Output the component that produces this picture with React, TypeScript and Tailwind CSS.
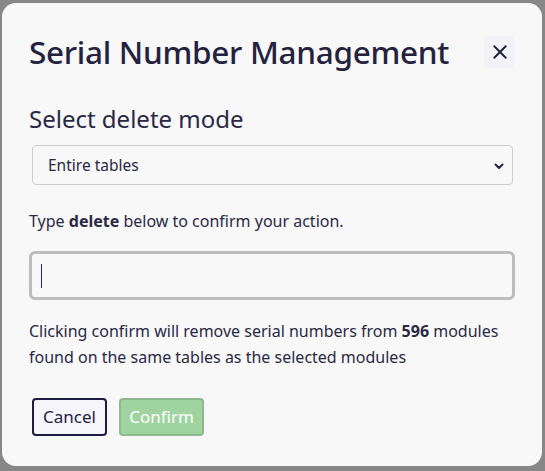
import React from 'react'

const font = { fontFamily: '"Noto Sans", "Open Sans", sans-serif' }

function CloseIcon() {
  return (
    <svg width="14" height="14" viewBox="0 0 14 14" fill="none" aria-hidden="true">
      <path d="M1.5 1.5 12.5 12.5M12.5 1.5 1.5 12.5" stroke="#24223f" strokeWidth="2" strokeLinecap="square" />
    </svg>
  )
}

function Chevron() {
  return (
    <svg width="10" height="7" viewBox="0 0 10 7" fill="none" aria-hidden="true">
      <path d="M1.5 1.5 5 5 8.5 1.5" stroke="#24223f" strokeWidth="2" strokeLinecap="round" strokeLinejoin="round" />
    </svg>
  )
}

export default function App() {
  return (
    <div className="relative h-[471px] w-[545px] overflow-hidden bg-[#878787] pt-[3px] pl-[2px] pr-[3px]" style={font}>
      <div className="flex h-[463px] flex-col rounded-[14px] bg-[#f8f8f8] px-[27px] text-[#24223f]">
        {/* Header */}
        <div className="mt-[29px] flex items-center justify-between">
          <h1 className="text-[31.5px] leading-[40px] font-medium tracking-[-0.3px]">Serial Number Management</h1>
          <button className="flex h-[32px] w-[31px] items-center justify-center rounded-[4px] bg-[#f2f2f8]">
            <CloseIcon />
          </button>
        </div>

        {/* Mode */}
        <h2 className="mt-[32px] text-[24px] leading-[30px] font-normal text-[#2a2944]">Select delete mode</h2>
        <div className="mt-[11px] ml-[3px] mr-[2px] flex h-[40px] items-center justify-between rounded-[4px] border border-[#cfcfcf] bg-[#f8f8f8] pt-[2px] pl-[15px] pr-[8px]">
          <span className="text-[15.5px] text-[#2a2944]">Entire tables</span>
          <Chevron />
        </div>

        <p className="mt-[25px] text-[16px] leading-[22px] text-[#2a2944]">
          Type <b className="font-bold">delete</b> below to confirm your action.
        </p>

        {/* Confirm input */}
        <div className="mt-[19px] flex h-[49px] items-center rounded-[6px] border-[3px] border-[#bdbdbd] bg-[#f8f8f8] pl-[9px]">
          <span className="h-[24px] w-px bg-[#24223f]" />
        </div>

        <p className="mt-[18px] text-[16px] leading-[26px] text-[#2a2944]">
          Clicking confirm will remove serial numbers from <b className="font-bold">596</b> modules
          <br />
          found on the same tables as the selected modules
        </p>

        {/* Actions */}
        <div className="mt-[28px] ml-[3px] flex gap-[12px]">
          <button className="h-[38px] w-[75px] rounded-[4px] border-2 border-[#1f1d3f] bg-[#f5f5fa] text-[17px] text-[#24223f]">
            Cancel
          </button>
          <button className="h-[38px] w-[85px] rounded-[4px] border-2 border-[#8fb88f] bg-[#9fd4a0] text-[17px] text-white">
            Confirm
          </button>
        </div>
      </div>
    </div>
  )
}
